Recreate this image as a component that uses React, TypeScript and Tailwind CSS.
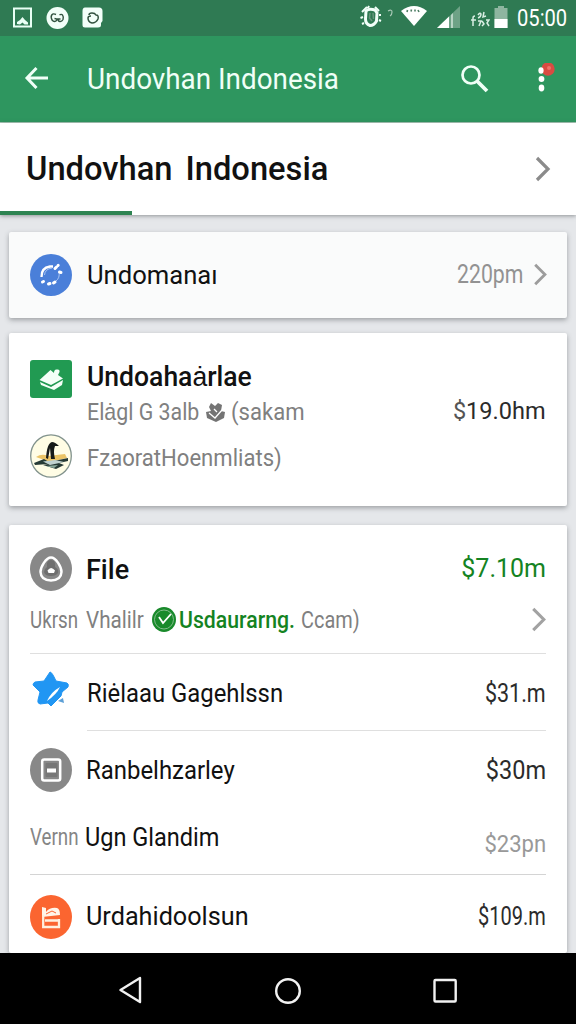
import type { ReactNode } from "react";

function Line({ className = "", children }: { className?: string; children: ReactNode }) {
  return <span className={`inline-block whitespace-pre ${className}`}>{children}</span>;
}

function Chevron({ className }: { className: string }) {
  return (
    <svg viewBox="0 0 16 26" className={className} fill="none" stroke="currentColor" strokeWidth="3.2">
      <path d="M2 2 L13 13 L2 24" />
    </svg>
  );
}

function StatusBar() {
  return (
    <div className="flex h-9 shrink-0 items-center bg-[#2f7a53] text-white">
      <svg className="ml-3 h-[22px] w-[22px]" viewBox="0 0 22 22" fill="none">
        <rect x="2" y="1.500" width="17" height="18" stroke="#e9fff5" strokeWidth="2" />
        <path d="M5 17 L5 15 L8 13 L10.500 10 L13 13 L16 15.500 L16 17.500 L12.500 17.500 L10.500 15.500 L8 17.500 Z" fill="#e9fff5" />
      </svg>
      <svg className="ml-3 h-[23px] w-[23px]" viewBox="0 0 23 23" fill="none">
        <circle cx="11.500" cy="11" r="11" fill="#f2fff9" />
        <path d="M10 7.500 C6 5.500 4 9 6 13 C8 15.500 11 14.500 11 12 L8.500 11.500 M13.500 8 C16 6 18 9 17 12.500 C15.500 15.500 12 15 12 12 L14.500 12" stroke="#31523f" strokeWidth="1.400" />
      </svg>
      <svg className="ml-[13px] h-[22px] w-[22px]" viewBox="0 0 22 22" fill="none">
        <path d="M3 .5 L17 .5 Q20.500 .5 20.500 4 L20.500 14 L19 16 L19 18 Q19 20.500 16 20.500 L3 20.500 Q.5 20.500 .5 18 L.5 4 Q.5 .5 3 .5 Z" fill="#f2fff9" />
        <path d="M7 8 Q7 6 10 6 Q13 6 14 8 Q17 8 16 12 Q14 16 10 16 Q6 15 6 11 Q6 9 9 9" stroke="#31523f" strokeWidth="1.500" />
      </svg>
      <div className="flex-1" />
      <svg className="-mt-1 h-[26px] w-9" viewBox="0 0 36 26" fill="none">
        <path d="M7 8 Q10 5 16 7 L18 10 L17.500 18 Q15 22.500 11 22.500 Q6.500 21 6.500 16 Z" stroke="#f2fff9" strokeWidth="3" />
        <path d="M3 9 L8 4 M16 4 L20 8 M4 14 L1.500 15 M20 12 L22 12 M20 17 L22 18 M5 20 L3 21 M9 5 L10 3" stroke="#f2fff9" strokeWidth="2" />
        <path d="M11 10 L10.500 15 L13 18 M14 10 L14.500 16" stroke="#66947b" strokeWidth="1.500" />
        <path d="M29 8 Q33 6 33 9 Q33 12 31 13" stroke="#a8c9b6" strokeWidth="1.200" />
      </svg>
      <svg className="ml-[5px] -mt-1 h-[22px] w-[28px]" viewBox="0 0 28 22" fill="none">
        <path d="M1 6 Q14 -4 27 6 L14 21 Z" fill="#fff" />
        <path d="M7 7 L7.500 5 M11 6.500 L11.500 4.500 M15 6.500 L15 4.500 M19 7 L18 5" stroke="#4d7d64" strokeWidth="1.600" />
      </svg>
      <svg className="ml-[9px] -mt-[2px] h-[23px] w-6" viewBox="0 0 24 23">
        <path d="M0 22 L23 0 L23 22 Z" fill="#6ea286" />
        <path d="M0 22 L12 10.500 L12 22 Z" fill="#fff" />
        <path d="M14 9 L16 7 L16 22 L14 22 Z" fill="#b9d5c5" />
      </svg>
      <svg className="ml-[9px] mt-[2px] h-[18px] w-5" viewBox="0 0 20 18" fill="none" stroke="#d9eee3" strokeWidth="1.500">
        <path d="M3 16 L3 8 Q3 6 5 6 M1 10 L6 10 M8 5 Q10 2 11 4 Q11 7 8 8 M14 2 L13 7 L16 6 M8 11 L11 11 L9 16 M12 11 L14 14 L12 16 M16 10 L19 10 L17 13 L19 16" />
      </svg>
      <svg className="ml-[4px] -mt-[2px] h-[22px] w-[14px]" viewBox="0 0 14 22">
        <path d="M4 0 H10 V2 H13.500 V22 H.5 V2 H4 Z" fill="#8eb5a0" />
        <path d="M.5 13 H13.500 V22 H.5 Z" fill="#fff" />
      </svg>
      <Line className="mr-[7px] ml-[9px] w-[52px] origin-left scale-x-[.84] text-[24px] leading-9">05:00</Line>
    </div>
  );
}

function AppBar() {
  return (
    <div className="flex h-[87px] shrink-0 items-center border-b border-[#a8c8b7] bg-[#2e965f] text-[#f0fff7]">
      <svg className="ml-[24px] -mt-[2px] h-6 w-[25px]" viewBox="0 0 25 24" fill="none" stroke="currentColor" strokeWidth="3">
        <path d="M12.500 2 L3 12 L12.500 22 M3 12 H24" />
      </svg>
      <Line className="ml-[38px] w-[260px] origin-left scale-x-[.96] text-[29px] leading-[40px]">Undovhan Indonesia</Line>
      <div className="flex-1" />
      <svg className="mr-[46px] h-[30px] w-[30px]" viewBox="0 0 30 30" fill="none" stroke="currentColor">
        <circle cx="11" cy="11" r="8.500" strokeWidth="2.700" />
        <path d="M17 17 L27 27" strokeWidth="3.800" />
      </svg>
      <svg className="mr-5 h-8 w-5" viewBox="0 0 20 32">
        <circle cx="12" cy="6" r="6.700" fill="#d94b42" />
        <circle cx="13" cy="5" r="2" fill="#ef7268" />
        <ellipse cx="5" cy="7.500" rx="2.600" ry="3.200" fill="#fff" />
        <circle cx="5.500" cy="16" r="2.900" fill="#fff" />
        <ellipse cx="5.500" cy="25" rx="2.800" ry="3.400" fill="#fff" />
      </svg>
    </div>
  );
}

const card = "mx-[9px] shrink-0 rounded-[2px] shadow-[0_2px_5px_rgba(60,65,70,0.42)]";

export default function App() {
  return (
    <div className="flex h-[1024px] w-[576px] flex-col overflow-hidden bg-[#e5e7ea] font-['Roboto',sans-serif] text-[#111]">
      <StatusBar />
      <AppBar />

      <div className="flex h-[92px] shrink-0 flex-col bg-white shadow-[0_1px_4px_rgba(60,65,70,0.5)]">
        <div className="flex h-[88px] items-center justify-between pr-[25px] pl-[26px]">
          <Line className="mt-[3px] origin-left scale-x-[.99] text-[33px] leading-[40px] font-medium [word-spacing:5px]">Undovhan Indonesia</Line>
          <Chevron className="mt-[3px] h-[26px] w-4 text-[#8b8b8b]" />
        </div>
        <div className="h-1 w-[132px] bg-[#2e8452]" />
      </div>

      <div className={`${card} mt-[17px] flex h-[86px] items-center bg-[#fafbfb] pr-5 pl-[21px]`}>
        <svg className="h-[42px] w-[42px]" viewBox="0 0 42 42" fill="none">
          <circle cx="21" cy="21" r="21" fill="#4a7fd9" />
          <path d="M11.500 23 Q11 14 20 12.500 L23 12.500" stroke="#fff" strokeWidth="2.300" />
          <path d="M14.500 21 Q15 15 22 14 M29 18 Q30 24 26 27" stroke="#a9c5f2" strokeWidth="1" />
          <path d="M25 14.500 L26.500 13 M28 11.500 L28.200 11.300 M29.500 18 L31 18.500 M12.500 28 L13.500 27.500 M18.500 30 L20 29.500 M23.500 29 L25 28" stroke="#fff" strokeWidth="3" strokeLinecap="round" />
        </svg>
        <Line className="ml-[15px] origin-left scale-x-[.985] text-[26px]">Undomanaı</Line>
        <div className="flex-1" />
        <Line className="mr-[9px] w-[67px] origin-left scale-x-[.85] text-[25px] text-[#929292]">220pm</Line>
        <Chevron className="-mt-[2px] mr-[-1px] h-[23px] w-[15px] text-[#9c9c9c]" />
      </div>

      <div className={`${card} mt-[15px] flex h-[173px] items-start bg-white pl-[21px]`}>
        <div className="flex w-[57px] flex-col items-start">
          <svg className="mt-[27px] h-[38px] w-[42px]" viewBox="0 0 42 38">
            <rect width="42" height="38" rx="3" fill="#219a52" />
            <path d="M9.500 20 L20.500 10 L24 13 Q24 9 27 9.500 Q30 9 29.500 12 L28 15 L33 18.500 L21 25 Z" fill="#f4fff8" />
            <path d="M10 22 L21 27 L33 20 L32 25 L24 30 L11 25 Z" fill="#f4fff8" />
          </svg>
          <svg className="mt-[36px] h-11 w-[42px]" viewBox="0 0 42 44" fill="none">
            <ellipse cx="21" cy="22" rx="20.300" ry="21.200" fill="#fffde5" stroke="#82938d" strokeWidth="1.300" />
            <path d="M6 23 Q12 19 18 22 L35 20 L37 24 L20 28 Z" fill="#ebc466" />
            <path d="M16 24 Q17 9 22 8 Q25 8 29 12 L25 12 Q23 17 25 25 L21 25 L20 14 L18 25 Z" fill="#161a19" />
            <path d="M4 29 L14 25 L19 28 L38 24 L38 27 L29 29 L34 31 L26 35 L13 31 L18 30 L5 31 Z" fill="#263a35" />
            <path d="M13 27.500 L25 26 L34 28 L20 31 Z" fill="#c0d2d0" />
            <path d="M16 32 L28 31 L24 34 Z" fill="#89a99c" />
          </svg>
        </div>
        <div className="flex flex-1 flex-col items-start pt-[27px]">
          <Line className="origin-left scale-x-[.982] text-[27px] leading-[34px] font-medium">Undoahaȧrlae</Line>
          <div className="flex h-9 items-center text-[24px] leading-9 text-[#808080]">
            <Line className="w-[119px] origin-left scale-x-[.89]">Elȧgl G 3alb</Line>
            <svg className="h-[21px] w-[19px]" viewBox="0 0 19 21">
              <path d="M5 1 L9 4 L12 1 L16 3 L15 9 L19 10 L18 16 L10 20 L1 16 L0 10 L5 9 L3 5 Z" fill="#747474" />
              <path d="M3 11 L9 16 L16 8 M8 7 L11 10" fill="none" stroke="#fff" strokeWidth="1.300" />
            </svg>
            <Line className="ml-[6px] origin-left scale-x-[.92]">(sakam</Line>
          </div>
          <Line className="mt-[10px] origin-left scale-x-[.92] text-[24px] leading-9 text-[#808080]">FzaoratHoenmliats)</Line>
        </div>
        <Line className="mt-[60px] mr-[21px] origin-right scale-x-[.98] text-[24px] leading-9 text-[#2b2b2b]">
          <span className="text-[#555]">$</span>19.0hm
        </Line>
      </div>

      <div className={`${card} mt-[19px] flex h-[428px] flex-col bg-white pr-[21px] pl-[21px]`}>
        <div className="flex h-[88px] shrink-0 items-center">
          <svg className="h-11 w-[42px]" viewBox="0 0 42 44" fill="none">
            <ellipse cx="21" cy="22" rx="21" ry="22" fill="#888" />
            <path d="M21 10.500 C16 10.500 10.500 20 10.500 25 Q11 33.500 21 33.500 Q31 33.500 31.500 25 C31.500 20 26 10.500 21 10.500 Z" stroke="#fff" strokeWidth="2.500" />
            <path d="M17 20 Q16 13 21 13 Q26 13 25 20 Q29 22 28 26 Q26 29 21 29 Q15 29 14 25 Q14 22 17 20 Z" fill="#6f6f6f" />
            <path d="M17.500 23.500 Q21 18.500 25 23.500 L24 26 L18.500 26 Z" fill="#fff" />
          </svg>
          <Line className="mt-[3px] ml-[14px] text-[27px] font-medium">File</Line>
          <div className="flex-1" />
          <Line className="origin-right text-[25px] text-[#148322]">$7.10m</Line>
        </div>
        <div className="flex h-[40px] shrink-0 items-start text-[24px] leading-[14px] text-[#808080]">
          <Line className="w-[56px] origin-left scale-x-[.78]">Ukrsn</Line>
          <Line className="w-[66px] origin-left scale-x-[.86]">Vhalilr</Line>
          <svg className="-mt-[6px] h-[25px] w-6" viewBox="0 0 24 25" fill="none">
            <ellipse cx="12" cy="12.500" rx="12" ry="12.500" fill="#198a2b" />
            <circle cx="12" cy="12.500" r="9.500" stroke="#83bc8b" strokeWidth="1" />
            <path d="M7 10 L11 16 L19 7" stroke="#fff" strokeWidth="1.800" />
          </svg>
          <Line className="ml-[3px] w-[122px] origin-left scale-x-[.885] font-medium text-[#148322]">Usdaurarng.</Line>
          <Line className="origin-left scale-x-[.83]">Ccam)</Line>
          <div className="flex-1" />
          <Chevron className="-mt-[6px] -mr-[1px] h-[25px] w-4 text-[#a2a2a2]" />
        </div>
        <div className="flex h-[77px] shrink-0 items-center border-t border-[#dfdfdf]">
          <svg className="-mt-[5px] h-[38px] w-[42px]" viewBox="0 0 42 38">
            <path d="M20 1 Q22 1 26 10 L37 12 Q39 13 38 16 L32 21 L31 25 L21 35 L18 32 L10 33 Q7 32 8 29 L10 21 L3 14 Q3 12 5 11 L14 10 Z" fill="#2196f3" stroke="#2196f3" strokeLinejoin="round" />
            <path d="M17 30 Q21 21 30 16 Q27 23 17 30 Z" fill="#fff" />
            <path d="M28 30 L33 27 L34 32 Z" fill="#5c9fd6" />
          </svg>
          <Line className="mt-[2px] ml-[15px] origin-left scale-x-[.918] text-[26px]">Riėlaau Gagehlssn</Line>
          <div className="flex-1" />
          <Line className="mt-[3px] origin-right scale-x-[.86] text-[25px] text-[#2b2b2b]">$31.m</Line>
        </div>
        <div className="ml-[57px] h-px shrink-0 bg-[#dfdfdf]" />
        <div className="flex h-[78px] shrink-0 items-center">
          <svg className="h-11 w-[42px]" viewBox="0 0 42 44" fill="none">
            <ellipse cx="21" cy="22" rx="21" ry="22" fill="#888" />
            <rect x="12.200" y="11.500" width="18" height="21" rx="2" stroke="#fff" strokeWidth="2.500" />
            <rect x="15.500" y="15" width="12" height="14" rx="1" fill="#777" />
            <rect x="17" y="20.500" width="9" height="4" fill="#fff" />
          </svg>
          <Line className="ml-[14px] origin-left scale-x-[.92] text-[26px]">Ranbelhzarley</Line>
          <div className="flex-1" />
          <Line className="mt-[2px] origin-right scale-x-[.94] text-[25px] text-[#2b2b2b]">$30m</Line>
        </div>
        <div className="flex h-[65px] shrink-0 items-start text-[26px] leading-[56px]">
          <Line className="w-[55px] origin-left scale-x-[.78] text-[24px] text-[#858585]">Vernn</Line>
          <Line className="origin-left scale-x-[.905]">Ugn Glandim</Line>
          <div className="flex-1" />
          <Line className="mt-[7px] origin-right scale-x-[.92] text-[24px] text-[#999]">$23pn</Line>
        </div>
        <div className="flex h-[79px] shrink-0 items-center border-t border-[#d4d4d4] pt-[5px]">
          <svg className="h-11 w-[42px]" viewBox="0 0 42 44" fill="none">
            <ellipse cx="21" cy="22" rx="21" ry="22" fill="#fb6530" />
            <path d="M12 12 L16 13 L16 17 Q20 12 27 13 Q30 14 30 20 L12 22 Z" fill="#fff5e9" />
            <path d="M16 19 L22 16 L26 18" stroke="#fb6530" strokeWidth="1" />
            <path d="M13.200 20 V32 H29 V24 M15 25.500 H28" stroke="#fff0de" strokeWidth="2.300" />
          </svg>
          <Line className="ml-[14px] origin-left scale-x-[.97] text-[26px]">Urdahidoolsun</Line>
          <div className="flex-1" />
          <Line className="origin-right scale-x-[.8] text-[25px] text-[#2b2b2b]">$109.m</Line>
        </div>
      </div>

      <div className="relative flex h-[71px] shrink-0 items-center bg-black">
        <svg className="ml-[118px] h-[30px] w-[26px]" viewBox="0 0 26 30" fill="none" stroke="#f1f1f1" strokeWidth="2.400">
          <path d="M22 4 L2.500 16 L22 28 Z" strokeLinejoin="round" />
        </svg>
        <svg className="ml-[130px] h-[30px] w-7" viewBox="0 0 28 30" fill="none" stroke="#f1f1f1" strokeWidth="2.400">
          <circle cx="14" cy="17" r="11.800" />
        </svg>
        <svg className="ml-[131px] h-[28px] w-6" viewBox="0 0 24 28" fill="none" stroke="#f1f1f1" strokeWidth="2.400">
          <rect x="1.500" y="5" width="21.200" height="21.500" rx="1" />
        </svg>
      </div>
    </div>
  );
}
